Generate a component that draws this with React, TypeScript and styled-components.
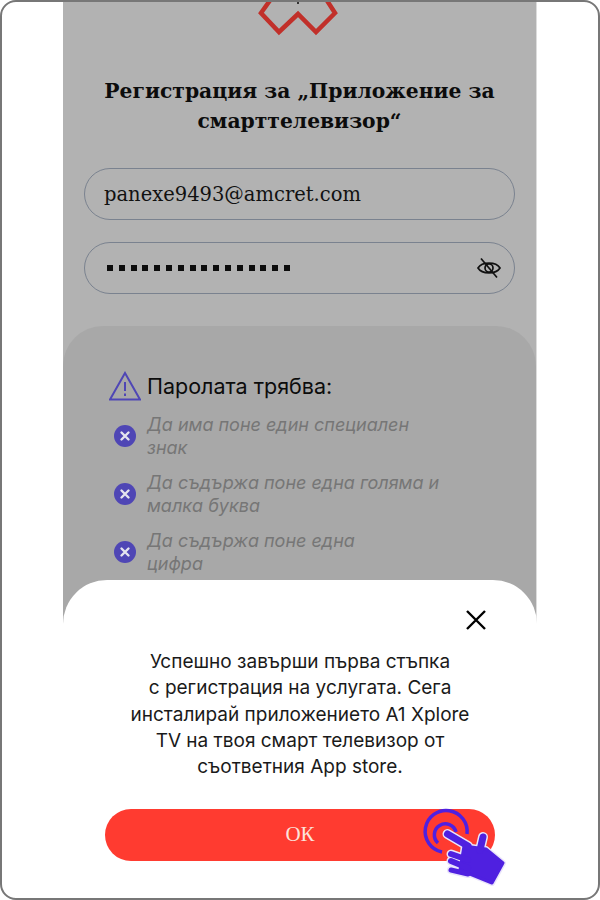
import React, { FC } from "react";
import styled, { createGlobalStyle } from "styled-components";

const GlobalStyle = createGlobalStyle`
  html, body {
    margin: 0;
    padding: 0;
    background: #fff;
  }
`;

const Frame = styled.div`
  position: relative;
  box-sizing: border-box;
  width: 600px;
  height: 900px;
  padding-left: 61px;
  border: 2px solid #777;
  border-radius: 16px;
  overflow: hidden;
  background: #fff;
`;

const Panel = styled.main`
  box-sizing: border-box;
  display: flex;
  flex-direction: column;
  width: 474px;
  height: 100%;
  background: #b2b2b2;
  border-right: 1px solid #dcdcdc;
`;

const Logo = styled.svg`
  display: block;
  flex: none;
  width: 84px;
  height: 36px;
  margin-left: 193px;
`;

const Heading = styled.h1`
  margin: 39px 0 0;
  text-align: center;
  font-family: "DejaVu Serif", serif;
  font-size: 20.300px;
  font-weight: 700;
  line-height: 29.500px;
  color: #0c0c0c;
`;

const Form = styled.form`
  display: flex;
  flex-direction: column;
  gap: 22px;
  margin: 32px 21px 0;
`;

const Field = styled.div`
  box-sizing: border-box;
  display: flex;
  align-items: center;
  justify-content: space-between;
  height: 52px;
  padding: 0 12px 0 19px;
  border: 1px solid #7a828f;
  border-radius: 26px;
  font-family: "DejaVu Serif", serif;
  font-size: 19.500px;
  color: #111;
`;

const Dots = styled.div`
  display: flex;
  gap: 5.800px;
  padding-left: 3px;
`;

const Dot = styled.span`
  width: 6px;
  height: 6px;
  background: #0c0c0c;
`;

const Requirements = styled.section`
  flex: 1;
  margin-top: 32px;
  padding: 45px 46px 0 46px;
  background: #a8a8a8;
  border-radius: 40px 40px 0 0;
`;

const RequirementsTitle = styled.div`
  display: flex;
  align-items: center;
  gap: 6px;
  font-family: "Inter", sans-serif;
  font-size: 21.500px;
  line-height: 30px;
  color: #0c0c0c;
`;

const Rule = styled.div`
  display: flex;
  align-items: center;
  gap: 11px;
  margin-top: 12px;
  padding-left: 5px;
  font-family: "Inter", sans-serif;
  font-style: italic;
  font-size: 18px;
  line-height: 23px;
  color: #767676;

  &:first-of-type {
    margin-top: 2px;
  }
`;

const Sheet = styled.section`
  position: absolute;
  left: 61px;
  right: 61px;
  top: 578px;
  bottom: 0;
  display: flex;
  flex-direction: column;
  align-items: center;
  background: #fff;
  border-radius: 44px 44px 0 0;
`;

const CloseButton = styled.button`
  align-self: flex-end;
  width: 24px;
  height: 24px;
  margin: 28px 49px 0 0;
  padding: 0;
  border: none;
  background: none;
  color: #000;
`;

const Message = styled.p`
  margin: 17px 0 0;
  text-align: center;
  font-family: "Inter", sans-serif;
  font-size: 19px;
  line-height: 26.250px;
  color: #1a1a1a;
`;

const OkButton = styled.button`
  position: relative;
  width: 390px;
  height: 52px;
  margin: 29px 0 0;
  padding: 0 0 2px;
  border: none;
  border-radius: 26px;
  background: #ff3b30;
  font-family: "Liberation Serif", serif;
  font-size: 21px;
  color: #fbe3dc;
`;

const Hand = styled.svg`
  position: absolute;
  left: 295px;
  top: -19px;
  width: 120px;
  height: 100px;
`;

const rules: string[][] = [
  ["Да има поне един специален", "знак"],
  ["Да съдържа поне една голяма и", "малка буква"],
  ["Да съдържа поне една", "цифра"],
];

const message = [
  "Успешно завърши първа стъпка",
  "с регистрация на услугата. Сега",
  "инсталирай приложението А1 Xplore",
  "TV на твоя смарт телевизор от",
  "съответния App store.",
];

// the hand is the same set of rounded strokes, drawn once as halo and once as fill
const HandShape: FC<{ color: string; extra: number }> = ({ color, extra }) => (
  <g stroke={color} fill={color} strokeLinecap="round" strokeLinejoin="round">
    <path d="M64 56L86 59L103 73L92 93L60 80Z" strokeWidth={3 + extra} />
    <path d="M47.500 44L68 56" strokeWidth={7 + extra} fill="none" />
    <path d="M83 47L80 60" strokeWidth={7 + extra} fill="none" />
    <path d="M51 64L68 70" strokeWidth={6 + extra} fill="none" />
    <path d="M51 71L68 78" strokeWidth={6 + extra} fill="none" />
    <path d="M51 80L68 84" strokeWidth={5 + extra} fill="none" />
  </g>
);

const CrossBadge: FC = () => (
  <svg width="22" height="22" viewBox="0 0 22 22" style={{ flex: "none" }}>
    <circle cx="11" cy="11" r="11" fill="#4f46b5" />
    <path d="M7.500 7.500l7 7M14.500 7.500l-7 7" stroke="#e4e4ee" strokeWidth="2.400" strokeLinecap="round" />
  </svg>
);

const App: FC = () => (
  <Frame>
    <GlobalStyle />
    <Panel>
      <Logo viewBox="0 0 84 36">
        <path
          d="M15 -3L5 11L23 30L42 12L60 30L79 11L70 -3"
          fill="none"
          stroke="#c1302a"
          strokeWidth="4.500"
        />
        <rect x="41" y="0" width="2" height="2" fill="#333" />
      </Logo>
      <Heading>
        Регистрация за „Приложение за
        <br />
        смарттелевизор“
      </Heading>
      <Form>
        <Field>panexe9493@amcret.com</Field>
        <Field>
          <Dots>
            {Array.from({ length: 16 }, (_, i) => (
              <Dot key={i} />
            ))}
          </Dots>
          <svg width="26" height="22" viewBox="0 0 26 22" fill="none" stroke="#111" strokeWidth="1.700">
            <path d="M2 11C6 4.500 20 4.500 24 11C20 17.500 6 17.500 2 11Z" />
            <circle cx="13" cy="11" r="4" />
            <path d="M5 1.500L21 20.500" />
          </svg>
        </Field>
      </Form>
      <Requirements>
        <RequirementsTitle>
          <svg width="32" height="30" viewBox="0 0 32 30" fill="none" stroke="#4f46b5" strokeWidth="2">
            <path d="M16 2L31 28.500H1Z" strokeLinejoin="miter" />
            <path d="M16 11V20M16 22.500V25" />
          </svg>
          Паролата трябва:
        </RequirementsTitle>
        {rules.map(lines => (
          <Rule key={lines[0]}>
            <CrossBadge />
            <div>
              {lines[0]}
              <br />
              {lines[1]}
            </div>
          </Rule>
        ))}
      </Requirements>
    </Panel>
    <Sheet>
      <CloseButton aria-label="Затвори">
        <svg width="24" height="24" viewBox="0 0 24 24" fill="none" stroke="#000" strokeWidth="2.400">
          <path d="M3 3L21 21M21 3L3 21" />
        </svg>
      </CloseButton>
      <Message>
        {message.map(line => (
          <React.Fragment key={line}>
            {line}
            <br />
          </React.Fragment>
        ))}
      </Message>
      <OkButton>
        ОК
        <Hand viewBox="0 0 120 100">
          <path d="M42 62A21 21 0 1 1 67 44" fill="none" stroke="#4f20e0" strokeWidth="3.500" />
          <path d="M38 53A11 11 0 1 1 56 42" fill="none" stroke="#4f20e0" strokeWidth="3.500" />
          <HandShape color="#e9e4fb" extra={3} />
          <HandShape color="#4f20e0" extra={0} />
        </Hand>
      </OkButton>
    </Sheet>
  </Frame>
);

export default App;
